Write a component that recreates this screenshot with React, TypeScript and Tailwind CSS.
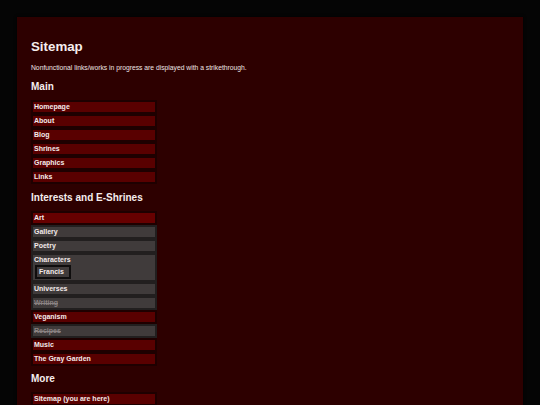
type Item = { label: string; gray?: boolean; strike?: boolean; bright?: boolean; children?: string[] }

const main: Item[] = [
  { label: 'Homepage' },
  { label: 'About' },
  { label: 'Blog' },
  { label: 'Shrines' },
  { label: 'Graphics' },
  { label: 'Links' },
]

const interests: Item[] = [
  { label: 'Art', bright: true },
  { label: 'Gallery', gray: true },
  { label: 'Poetry', gray: true },
  { label: 'Characters', gray: true, children: ['Francis'] },
  { label: 'Universes', gray: true },
  { label: 'Writing', gray: true, strike: true },
  { label: 'Veganism' },
  { label: 'Recipes', gray: true, strike: true },
  { label: 'Music' },
  { label: 'The Gray Garden' },
]

const more: Item[] = [{ label: 'Sitemap (you are here)' }]

function Row({ item }: { item: Item }) {
  const box = item.gray
    ? 'bg-[#403b3b] border-[#221f1f]'
    : item.bright
      ? 'bg-[#660000] border-[#1e0000]'
      : 'bg-[#590000] border-[#1e0000]'
  const text = item.strike ? 'text-[#8a8282] line-through' : 'text-[#f4eaea]'
  return (
    <li className={`border-2 pl-[1px] ${box}`}>
      <span className={`block h-[10px] text-[7px] font-bold leading-[10px] ${text}`}>{item.label}</span>
      {item.children && (
        <ul className="pb-[1px] pl-[1px]">
          {item.children.map((c) => (
            <li
              key={c}
              className="w-[36px] border-2 border-[#0f0d0d] bg-[#403b3b] pl-[2px] text-[7px] font-bold leading-[10px] text-[#f4eaea]"
            >
              {c}
            </li>
          ))}
        </ul>
      )}
    </li>
  )
}

function List({ items, className }: { items: Item[]; className: string }) {
  return (
    <ul className={`w-[126px] ${className}`}>
      {items.map((it) => (
        <Row key={it.label} item={it} />
      ))}
    </ul>
  )
}

export default function App() {
  return (
    <div className="min-h-screen bg-[#050505] pl-[17px] pr-[17px] pt-[17px] font-['Liberation_Sans',Arial,sans-serif]">
      <main className="min-h-[420px] w-[506px] bg-[#2d0000] pl-[14px] pt-[22px] pb-4 shadow-[0_0_3px_rgba(0,0,0,0.9)]">
        <h1 className="text-[13.3px] font-bold leading-[15px] text-[#f5eded]">Sitemap</h1>
        <p className="mt-[10px] text-[6.75px] leading-[8px] text-[#eee4e4]">
          Nonfunctional links/works in progress are displayed with a strikethrough.
        </p>

        <h2 className="mt-[9px] text-[10px] font-bold leading-[12px] text-[#f5eded]">Main</h2>
        <List items={main} className="mt-[7px]" />

        <h2 className="mt-[8px] text-[10px] font-bold leading-[12px] text-[#f5eded]">Interests and E-Shrines</h2>
        <List items={interests} className="mt-[7px]" />

        <h2 className="mt-[7px] text-[10px] font-bold leading-[12px] text-[#f5eded]">More</h2>
        <List items={more} className="mt-[7px]" />
      </main>
    </div>
  )
}
